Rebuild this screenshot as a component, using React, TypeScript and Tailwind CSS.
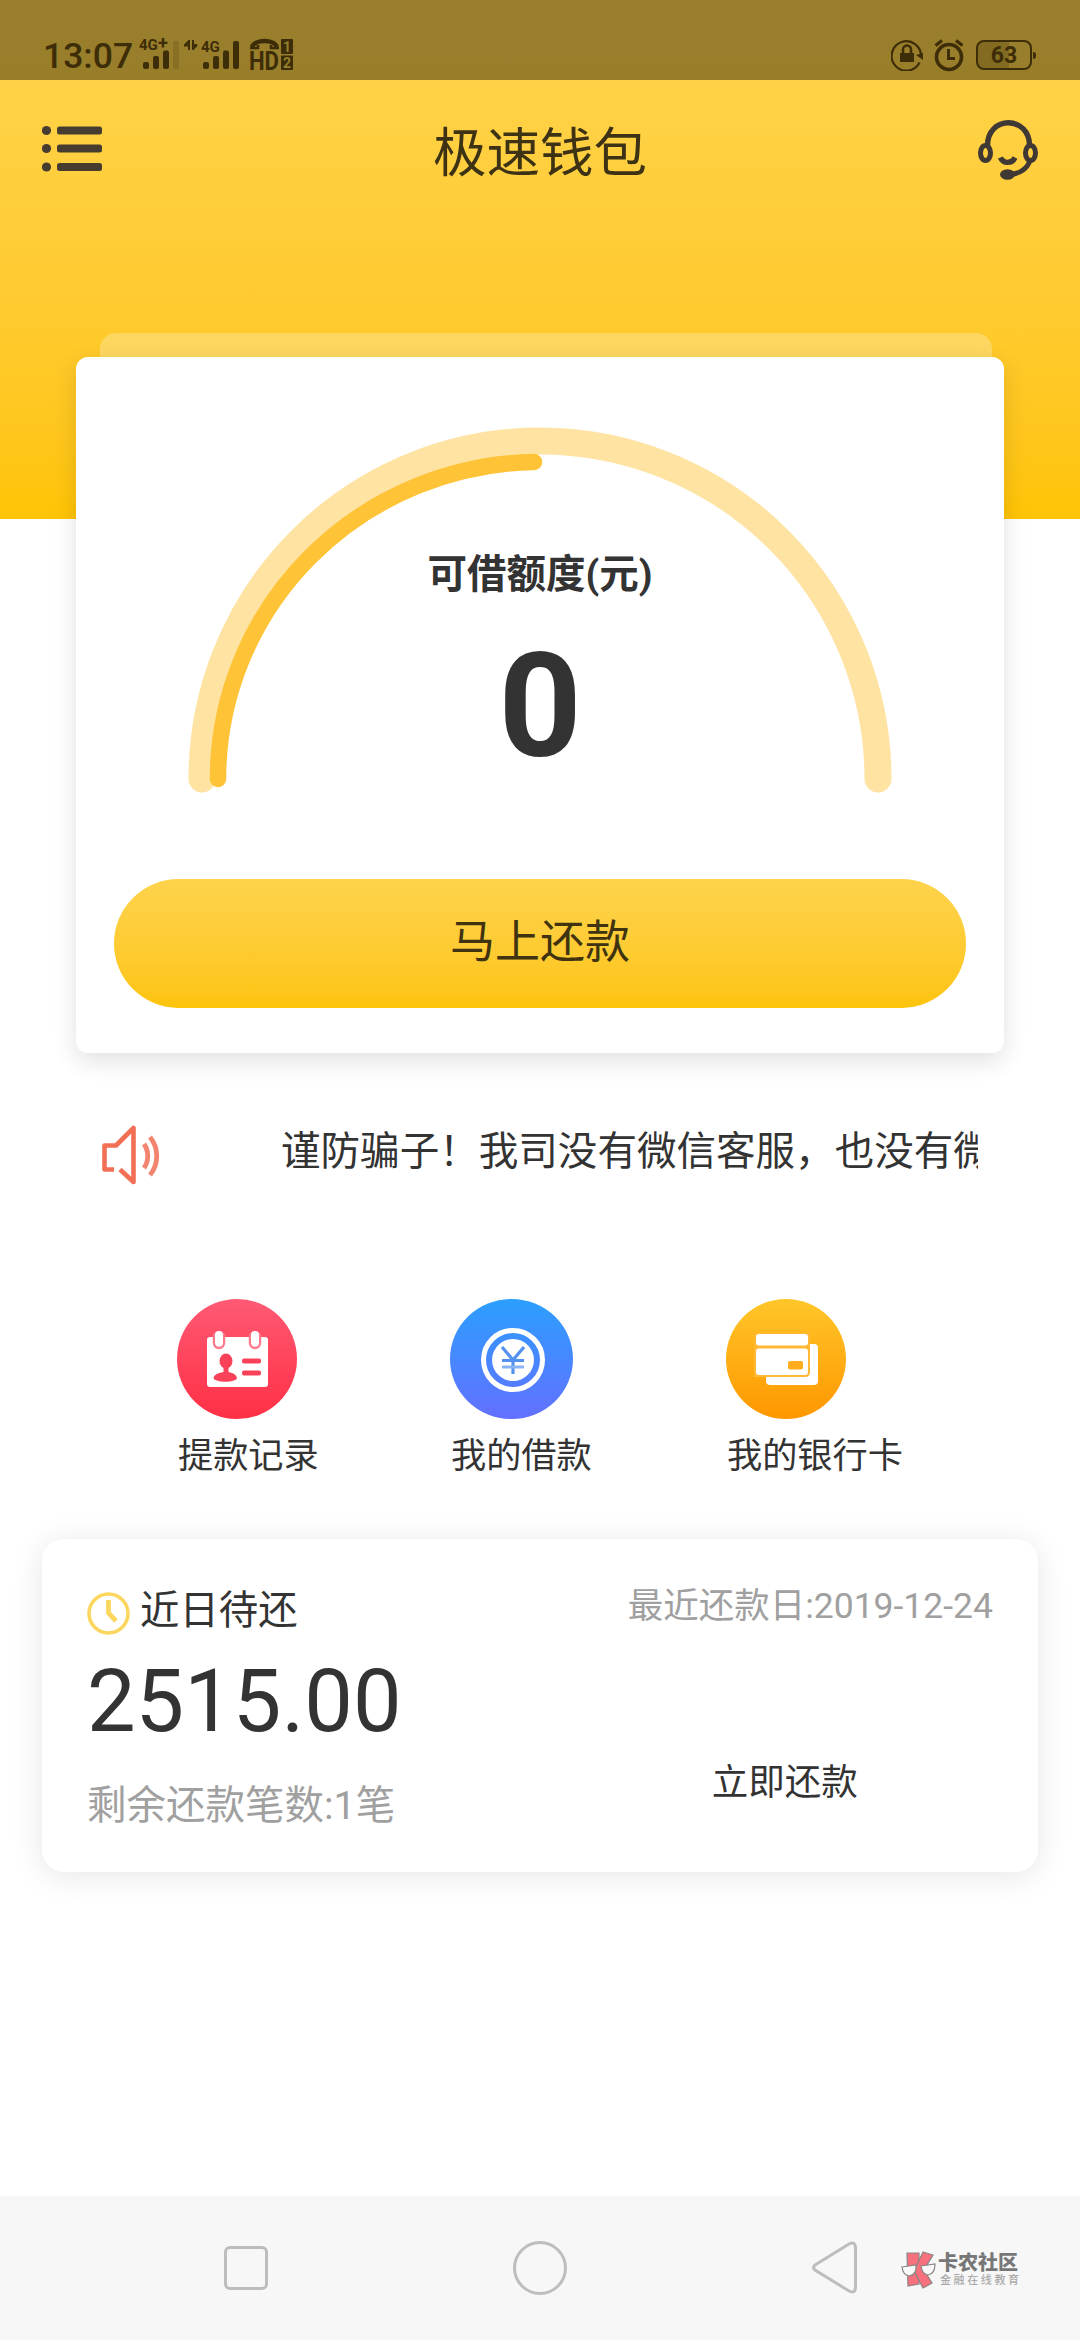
import React from 'react';

function Bars({ faded }: { faded?: boolean }) {
  return (
    <svg className="h-[28px] w-[38px]" viewBox="0 0 38 28" fill="#3d2d08">
      <rect x="0" y="21" width="6" height="7" rx="2" />
      <rect x="10" y="15" width="6" height="13" rx="2" />
      <rect x="20" y="9.500" width="6" height="18.500" rx="2" />
      <rect x="30" y="0" width="6" height="28" rx="2" opacity={faded ? 0.18 : 1} />
    </svg>
  );
}

function StatusBar() {
  return (
    <div className="relative flex h-[80px] items-start bg-black/40 text-[#3d2d08]">
      <span className="mt-[36px] ml-[43px] w-[95px] text-[35.500px] leading-[40px] font-medium">13:07</span>
      <div className="relative mt-[41px] ml-[5px] w-[46px]">
        <span className="absolute -top-[3px] -left-[4px] text-[15px] leading-[14px] font-bold">4G</span>
        <span className="absolute -top-[6px] left-[15px] text-[18px] leading-[16px] font-bold">+</span>
        <Bars faded />
      </div>
      <svg className="mt-[40px] ml-[-5px] h-[11px] w-[14px]" viewBox="0 0 14 11" stroke="#3d2d08" strokeWidth="2" fill="none">
        <path d="M5 0V10M0 5.500H5M9 0V10M9 5L13 5M1 5L5 1M9 9L13 5" />
      </svg>
      <div className="relative mt-[41px] ml-[5px] w-[46px]">
        <span className="absolute -top-[1px] -left-[2px] text-[15px] leading-[14px] font-bold">4G</span>
        <Bars />
      </div>
      <svg className="mt-[39px] h-[32px] w-[46px] overflow-visible" viewBox="0 0 46 32" fill="none" stroke="#3d2d08">
        <path d="M3 8C6 0 25 0 28 8" strokeWidth="4.500" />
        <path d="M1 9h8V6M22 6v3h8" strokeWidth="2.600" />
        <rect x="32" y="0" width="12" height="15" rx="1" fill="#3d2d08" stroke="none" />
        <rect x="32" y="16.500" width="12" height="14.500" rx="1" fill="#3d2d08" stroke="none" />
        <g stroke="none" fontFamily="Roboto" fontWeight="700">
          <text x="0" y="31" fontSize="25" textLength="30" lengthAdjust="spacingAndGlyphs" fill="#3d2d08">HD</text>
          <text x="34" y="12.500" fontSize="14" fill="#967e2b">1</text>
          <text x="34" y="29" fontSize="14" fill="#967e2b">2</text>
        </g>
      </svg>
      <div className="ml-auto flex items-start">
        <svg className="mt-[39px] h-[32px] w-[33px]" viewBox="0 0 33 32" fill="none" stroke="#3d2d08" strokeWidth="2.200">
          <path d="M28.500 23.500A14.700 14.700 0 1 1 30 18" />
          <path d="M25 16l7-2v7z" fill="#3d2d08" stroke="none" />
          <rect x="9" y="14" width="14" height="9" fill="#3d2d08" stroke="none" />
          <path d="M12 14v-3.500a4 4 0 0 1 8 0V14" strokeWidth="2.600" />
        </svg>
        <svg className="mt-[39px] ml-[10px] h-[33px] w-[30px]" viewBox="0 0 30 33" fill="none" stroke="#3d2d08">
          <circle cx="15" cy="18" r="12.500" strokeWidth="3.600" />
          <path d="M14.500 10v9.500H21" strokeWidth="3" />
          <path d="M1.500 6.500L8 1.500M28.500 6.500L22 1.500" strokeWidth="3.200" />
        </svg>
        <div className="mt-[40px] ml-[12px] flex h-[30px] w-[56px] justify-center rounded-[8px] border-2 border-[#3d2d08] bg-linear-to-r from-[#836b22] from-60% to-transparent to-60% text-[23px] leading-[27px] font-bold">
          63
        </div>
        <div className="mt-[52px] mr-[44px] ml-[1px] h-[7px] w-[3px] rounded-r-sm bg-[#3d2d08]" />
      </div>
    </div>
  );
}

function TitleBar() {
  return (
    <div className="flex h-[140px] items-start justify-between px-[42px] text-[#3d3320]">
      <svg className="mt-[44px] h-[50px] w-[60px]" viewBox="0 0 60 50" fill="#463d30">
        {[6.5, 24.5, 43].map((y) => (
          <g key={y}>
            <circle cx="4.500" cy={y} r="4.600" />
            <rect x="15" y={y - 4} width="45" height="8" rx="2.500" />
          </g>
        ))}
      </svg>
      <h1 className="mt-[44px] text-[53.500px] leading-[60px] font-normal text-[#3d3214]">极速钱包</h1>
      <svg className="mt-[40px] h-[60px] w-[60px]" viewBox="0 0 60 60" fill="none" stroke="#3f3834">
        <path d="M9.500 26C9-5 52-5 51.500 26" strokeWidth="5.400" />
        <ellipse cx="7.500" cy="33" rx="5" ry="7.500" strokeWidth="5" />
        <ellipse cx="52.500" cy="33" rx="5" ry="7.500" strokeWidth="5" />
        <path d="M22.500 37.500C25 44 34 44 37 37.500" strokeWidth="5.400" />
        <path d="M52 40C50 48 42 54 32 54.500" strokeWidth="5" />
        <ellipse cx="29.500" cy="54.500" rx="7.500" ry="5.200" fill="#3f3834" stroke="none" />
      </svg>
    </div>
  );
}

function QuotaCard() {
  return (
    <section className="relative -mt-[186px]">
      <div className="ml-[100px] h-[24px] w-[892px] rounded-t-[16px] bg-[#fdd75f]" />
      <div className="mx-auto flex h-[696px] w-[928px] flex-col items-center rounded-[12px] bg-white shadow-[0_8px_24px_rgba(0,0,0,0.12)]">
        <div className="relative mt-[70px] h-[366px] w-[704px]">
          <svg className="absolute inset-0 h-full w-full" viewBox="0 0 704 366" fill="none" strokeLinecap="round">
            <path d="M14 352A338 338 0 0 1 690 352" stroke="#fee3a3" strokeWidth="27" />
            <path d="M30 352A322 317 0 0 1 346 35" stroke="#fec337" strokeWidth="16.500" />
          </svg>
          <div className="relative flex flex-col items-center pt-[118px] text-[#333]">
            <span className="text-[39.500px] leading-[60px] font-bold">可借额度(元)</span>
            <span className="mt-[21px] text-[145px] leading-[160px] font-bold">0</span>
          </div>
        </div>
        <button className="mt-[86px] h-[129px] w-[852px] rounded-full bg-linear-to-b from-[#fed34b] to-[#fdc408] pb-[2px] text-[45px] text-[#40330f]">
          马上还款
        </button>
      </div>
    </section>
  );
}

function Notice() {
  return (
    <div className="mt-[72px] flex h-[60px] items-start pr-[102px] pl-[102px]">
      <svg className="h-[60px] w-[58px] shrink-0" viewBox="0 0 58 60" fill="none" stroke="#f26e55" strokeWidth="4.600" strokeLinejoin="round">
        <path d="M12 44.500H2.500V20.500H14L31.500 3V57L18 44.500" />
        <path d="M42 19C47 26 47 36 42 43M48 12C57 23 57 39 48 50" strokeWidth="4.800" opacity="0.850" />
      </svg>
      <p className="ml-[121px] w-[697px] overflow-hidden text-[39.550px] leading-[54px] whitespace-nowrap text-[#333]">
        谨防骗子！我司没有微信客服，也没有微
      </p>
    </div>
  );
}

function RecordIcon() {
  return (
    <svg className="h-[120px] w-[120px]" viewBox="0 0 120 120">
      <defs>
        <linearGradient id="red" x1="0" y1="0" x2="0" y2="1">
          <stop stopColor="#ff5a74" />
          <stop offset="1" stopColor="#ff2f45" />
        </linearGradient>
      </defs>
      <circle cx="60" cy="60" r="60" fill="url(#red)" />
      <rect x="30" y="38" width="61" height="50" rx="3" fill="#fff" />
      <g fill="#fff" stroke="#ff7a8b" strokeWidth="2.500">
        <rect x="37" y="33" width="10" height="16" rx="5" />
        <rect x="73" y="33" width="10" height="16" rx="5" />
      </g>
      <g fill="#fff">
        <rect x="38" y="32" width="8" height="15" rx="4" />
        <rect x="74" y="32" width="8" height="15" rx="4" />
      </g>
      <g fill="#f9425a">
        <ellipse cx="49" cy="62" rx="6.500" ry="7.500" />
        <path d="M46.500 67h5v6c5 1 8 3 8.500 6c-1 5-22 5-23.500 0c.5-3 4-5 10-6z" />
        <rect x="65" y="59.500" width="19" height="5" rx="2" />
        <rect x="65" y="71.500" width="19" height="5" rx="2" />
      </g>
    </svg>
  );
}

function LoanIcon() {
  return (
    <svg className="h-[120px] w-[123px]" viewBox="0 0 123 120" preserveAspectRatio="none">
      <defs>
        <linearGradient id="blue" x1="0" y1="0" x2="0" y2="1">
          <stop stopColor="#2b9fff" />
          <stop offset="1" stopColor="#6370ff" />
        </linearGradient>
      </defs>
      <ellipse cx="61.500" cy="60" rx="61.500" ry="60" fill="url(#blue)" />
      <circle cx="63" cy="61" r="29.500" fill="none" stroke="#fff" strokeWidth="5" />
      <circle cx="63" cy="61" r="21" fill="#fff" />
      <path d="M52 48L63 61L74 48M63 61V75M52 61.500H74" fill="none" stroke="#5591f0" strokeWidth="3.200" />
      <path d="M52 68H74" stroke="#8bb4f5" strokeWidth="3" />
    </svg>
  );
}

function BankIcon() {
  return (
    <svg className="h-[120px] w-[120px]" viewBox="0 0 120 120">
      <defs>
        <linearGradient id="amber" x1="0" y1="0" x2="0" y2="1">
          <stop stopColor="#ffc629" />
          <stop offset="1" stopColor="#ff9700" />
        </linearGradient>
      </defs>
      <circle cx="60" cy="60" r="60" fill="url(#amber)" />
      <rect x="40" y="45" width="52" height="41" rx="4" fill="#fff" />
      <path d="M28 34H84V73Q84 78 79 78H28Z" fill="#ffb936" />
      <rect x="30" y="35" width="52" height="11.500" rx="3" fill="#fff" />
      <rect x="30" y="49.500" width="52" height="26.500" rx="3" fill="#fff" />
      <rect x="62" y="62" width="15" height="8.500" rx="2" fill="#ffad1c" />
    </svg>
  );
}

function Shortcuts() {
  const items = [
    { label: '提款记录', icon: <RecordIcon /> },
    { label: '我的借款', icon: <LoanIcon /> },
    { label: '我的银行卡', icon: <BankIcon /> },
  ];
  return (
    <nav className="mt-[114px] grid grid-cols-[273px_276px_275px] pl-[177px]">
      {items.map((item) => (
        <div key={item.label} className="flex flex-col items-start">
          {item.icon}
          <span className="mt-[13px] ml-[1px] text-[35.200px] leading-[48px] whitespace-nowrap text-[#333]">{item.label}</span>
        </div>
      ))}
    </nav>
  );
}

function RepaymentCard() {
  return (
    <section className="mx-[42px] mt-[59px] flex h-[333px] justify-between rounded-[22px] bg-white pr-[45px] pl-[45px] shadow-[0_4px_32px_rgba(0,0,0,0.1)]">
      <div className="flex flex-col items-start">
        <div className="mt-[47px] flex h-[54px] items-start">
          <svg className="mt-[6px] h-[43px] w-[43px]" viewBox="0 0 43 43" fill="none" stroke="#fbd75f">
            <circle cx="21.500" cy="21.500" r="19.500" strokeWidth="3.600" />
            <path d="M21.500 8V21L29 29" strokeWidth="4.800" />
          </svg>
          <span className="ml-[10px] text-[39.400px] leading-[50px] text-[#333]">近日待还</span>
        </div>
        <div className="mt-[12px] text-[86.500px] leading-[100px] text-[#333]">2515.00</div>
        <div className="mt-[29px] text-[39.500px] leading-[50px] text-[#a0a0a0]">剩余还款笔数:1笔</div>
      </div>
      <div className="flex flex-col">
        <span className="mt-[42px] text-[35.500px] leading-[50px] text-[#a0a0a0]">最近还款日:2019-12-24</span>
        <button className="mt-[127px] ml-[84px] self-start text-[36.500px] leading-[50px] text-[#333]">立即还款</button>
      </div>
    </section>
  );
}

function Watermark() {
  return (
    <div className="mt-[55px] ml-[42px] flex">
      <svg className="h-[38px] w-[36px]" viewBox="0 0 36 38" stroke="#8b8584" strokeWidth="1.200">
        <path d="M6 2H18V33L7 35Z" fill="#f7707e" />
        <path d="M22 1L32 4L23 19L31 32L22 37L13 20Z" fill="#f7707e" />
        <path d="M1 16L15 14Q16 24 8 25Q2 24 1 16Z" fill="#fafafa" />
        <path d="M20 15L34 13Q34 23 27 24Q21 23 20 15Z" fill="#fafafa" />
      </svg>
      <div className="ml-[1px] flex flex-col text-[#777]">
        <span className="text-[20px] leading-[24px] font-black">卡农社区</span>
        <span className="-mt-[1px] ml-[2px] text-[11px] leading-[14px] font-medium tracking-[2.600px] whitespace-nowrap text-[#aaa]">金融在线教育</span>
      </div>
    </div>
  );
}

function SystemNav() {
  return (
    <footer className="mt-auto flex h-[144px] items-start bg-[#f7f7f7]">
      <div className="mt-[50px] ml-[224px] h-[44px] w-[44px] rounded-[6px] border-[3px] border-[#bdbdbd]" />
      <div className="mt-[45px] ml-[245px] h-[54px] w-[54px] rounded-full border-[3px] border-[#bdbdbd]" />
      <svg className="mt-[45px] ml-[245px] h-[54px] w-[47px]" viewBox="0 0 47 54" fill="none" stroke="#bdbdbd" strokeWidth="3">
        <path d="M3 24L37 3Q43.500 0 43.500 7V46Q43.500 53 37 50L3 29Q0 26.500 3 24Z" />
      </svg>
      <Watermark />
    </footer>
  );
}

export default function App() {
  return (
    <div className="flex h-[2340px] w-[1080px] flex-col overflow-hidden bg-white font-[Roboto,'Noto_Sans_CJK_SC',sans-serif]">
      <header className="h-[519px] shrink-0 bg-linear-to-b from-[#ffd44d] to-[#ffc403]">
        <StatusBar />
        <TitleBar />
      </header>
      <QuotaCard />
      <Notice />
      <Shortcuts />
      <RepaymentCard />
      <SystemNav />
    </div>
  );
}
